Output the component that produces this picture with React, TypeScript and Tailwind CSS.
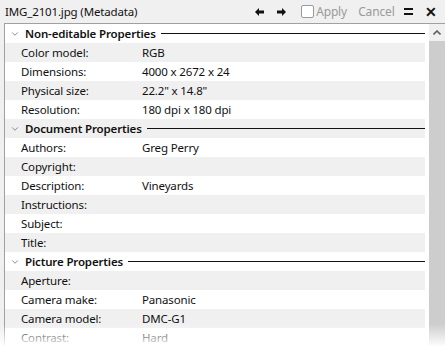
import { ChevronDown } from 'lucide-react';

type Row = { label: string; value?: string } | { header: string };

const rows: Row[] = [
	{ header: 'Non-editable Properties' },
	{ label: 'Color model:', value: 'RGB' },
	{ label: 'Dimensions:', value: '4000 x 2672 x 24' },
	{ label: 'Physical size:', value: '22.2" x 14.8"' },
	{ label: 'Resolution:', value: '180 dpi x 180 dpi' },
	{ header: 'Document Properties' },
	{ label: 'Authors:', value: 'Greg Perry' },
	{ label: 'Copyright:' },
	{ label: 'Description:', value: 'Vineyards' },
	{ label: 'Instructions:' },
	{ label: 'Subject:' },
	{ label: 'Title:' },
	{ header: 'Picture Properties' },
	{ label: 'Aperture:' },
	{ label: 'Camera make:', value: 'Panasonic' },
	{ label: 'Camera model:', value: 'DMC-G1' },
	{ label: 'Contrast:', value: 'Hard' },
];

const ArrowLeft = () => (
	<svg width="9" height="8" viewBox="0 0 9 8">
		<path d="M0 4 L4 0 L4 2.5 L9 2.5 L9 5.5 L4 5.5 L4 8 Z" fill="#111" />
	</svg>
);

const ArrowRight = () => (
	<svg width="9" height="8" viewBox="0 0 9 8">
		<path d="M9 4 L5 0 L5 2.5 L0 2.5 L0 5.5 L5 5.5 L5 8 Z" fill="#111" />
	</svg>
);

export default function App() {
	return (
		<div className="relative w-[445px] h-[346px] bg-[#f0f0f0] overflow-hidden flex flex-col text-[11.5px] tracking-[-0.15px] text-[#111] font-['Noto_Sans','Open_Sans',sans-serif]">
			{/* title bar */}
			<div className="h-[23px] flex items-center pl-[5px] pr-[8px] shrink-0">
				<span className="flex-1">IMG_2101.jpg (Metadata)</span>
				<div className="flex items-center">
					<span className="flex"><ArrowLeft /></span>
					<span className="flex ml-[13px]"><ArrowRight /></span>
					<span className="ml-[15px] w-[13px] h-[13px] border border-[#9a9a9a] rounded-[2px] bg-white" />
					<span className="ml-[2px] w-[34px] text-[12px] text-[#9a9a9a]">Apply</span>
					<span className="ml-[8px] w-[38px] text-[12px] text-[#9a9a9a]">Cancel</span>
					<span className="ml-[8px] flex flex-col gap-[3px]">
						<span className="block w-[9px] h-[2px] bg-[#111]" />
						<span className="block w-[9px] h-[2px] bg-[#111]" />
					</span>
					<span className="ml-[12px] text-[14px] font-bold leading-none">✕</span>
				</div>
			</div>

			{/* body */}
			<div className="flex-1 flex ml-[4px] border-l border-t border-[#a0a0a0] bg-white min-h-0">
				<div className="w-[420px] flex flex-col">
					{rows.map((r, i) => {
						const bg = i % 2 === 1 ? 'bg-[#f0f0f0]' : 'bg-white';
						if ('header' in r) {
							return (
								<div key={i} className={`h-[19px] shrink-0 flex items-center ${bg}`}>
									<ChevronDown size={10} strokeWidth={1.8} className="ml-[5px] text-[#666]" />
									<span className="ml-[5px] font-semibold">{r.header}</span>
									<span className="flex-1 h-px bg-[#111] ml-[5px]" />
								</div>
							);
						}
						return (
							<div key={i} className={`h-[19px] shrink-0 flex items-center pl-[16px] ${bg}`}>
								<span className="w-[121px]">{r.label}</span>
								<span>{r.value}</span>
							</div>
						);
					})}
				</div>
				<div className="ml-[4px] w-[16px] flex flex-col bg-[#cdcdcd]">
					<div className="h-[17px] bg-[#f0f0f0] flex items-center justify-center">
						<svg width="8" height="5" viewBox="0 0 8 5">
							<path d="M0.5 4.5 L4 1 L7.5 4.5" stroke="#606060" strokeWidth="1.6" fill="none" />
						</svg>
					</div>
				</div>
			</div>

			{/* bottom fade */}
			<div className="absolute left-0 right-0 bottom-0 h-[22px] bg-linear-to-b from-white/0 to-white/95" />
		</div>
	);
}
